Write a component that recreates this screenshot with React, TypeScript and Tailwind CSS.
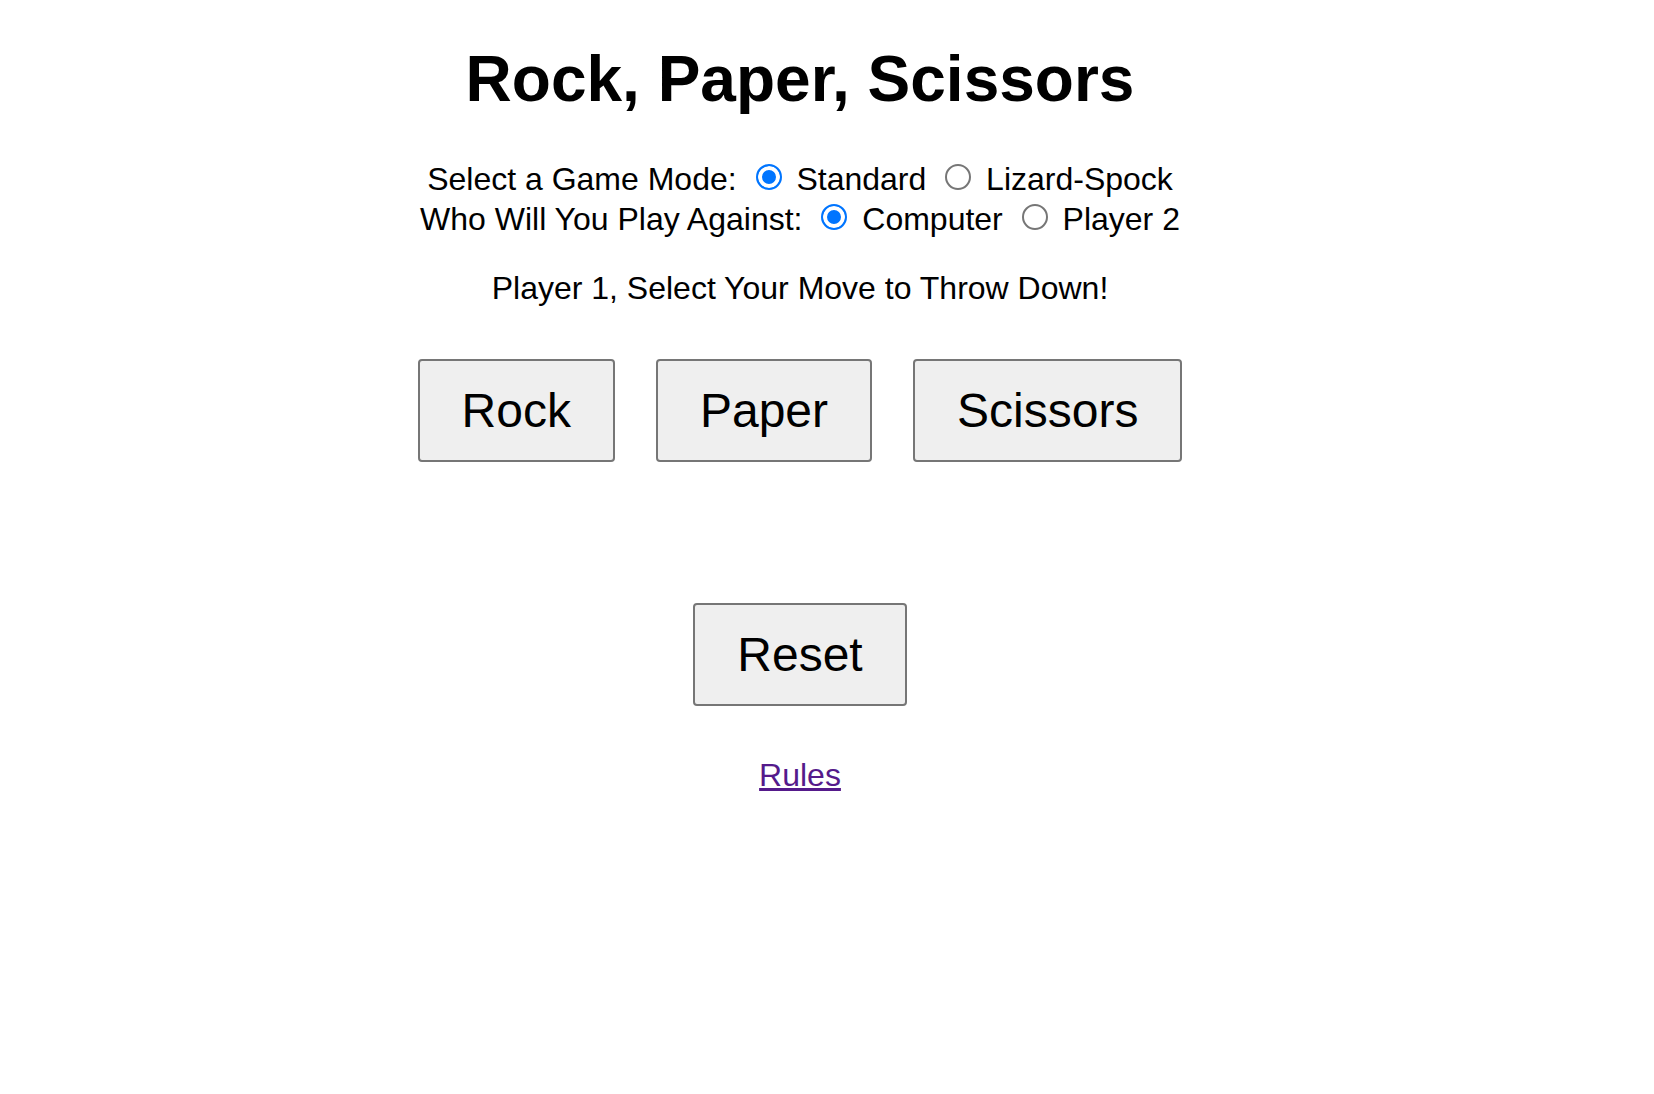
import { useState } from "react";

type Option = { value: string; label: string };

function RadioLine({
  label,
  options,
  value,
  onChange,
  className = "",
}: {
  label: string;
  options: Option[];
  value: string;
  onChange: (v: string) => void;
  className?: string;
}) {
  return (
    <div className={`leading-[36.8px] ${className}`}>
      {label}
      {options.map((o) => (
        <label key={o.value}>
          {" "}
          <input
            type="radio"
            checked={value === o.value}
            onChange={() => onChange(o.value)}
            className="mt-[6px] mr-[6px] mb-0 ml-[10px] inline-block h-[26px] w-[26px] appearance-none rounded-full border-2 border-[#767676] bg-white align-baseline checked:border-[#0075ff] checked:bg-[#0075ff] checked:shadow-[inset_0_0_0_4px_#ffffff]"
          />{" "}
          {o.label}
        </label>
      ))}
    </div>
  );
}

const btn =
  "rounded-[4px] border-2 border-[#767676] bg-[#efefef] px-[42px] py-[22px] text-[48px] leading-[55px] text-black";

export default function App() {
  const [mode, setMode] = useState("standard");
  const [opponent, setOpponent] = useState("computer");

  return (
    <div className="min-h-screen bg-white">
      <div className="w-[1600px] text-center font-['Liberation_Sans',Arial,sans-serif] text-[32px] text-black">
        <h1 className="mt-[43px] text-[64px] font-bold leading-[73.6px]">
          Rock, Paper, Scissors
        </h1>

        <div className="mt-[41px]">
          <RadioLine
            label="Select a Game Mode:"
            value={mode}
            onChange={setMode}
            options={[
              { value: "standard", label: "Standard" },
              { value: "lizard", label: "Lizard-Spock" },
            ]}
          />
          <RadioLine
            className="mt-px"
            label="Who Will You Play Against:"
            value={opponent}
            onChange={setOpponent}
            options={[
              { value: "computer", label: "Computer" },
              { value: "player2", label: "Player 2" },
            ]}
          />
        </div>

        <p className="mt-[32px] leading-[36.8px]">
          Player 1, Select Your Move to Throw Down!
        </p>

        {/* moves */}
        <div className="mt-[52px] flex justify-center gap-[41px]">
          <button className={btn}>Rock</button>
          <button className={btn}>Paper</button>
          <button className={btn}>Scissors</button>
        </div>

        <div className="mt-[141px] flex justify-center">
          <button className={btn}>Reset</button>
        </div>

        <p className="mt-[51px] leading-[36.8px]">
          <a href="#rules" className="text-[#551a8b] underline">
            Rules
          </a>
        </p>
      </div>
    </div>
  );
}
